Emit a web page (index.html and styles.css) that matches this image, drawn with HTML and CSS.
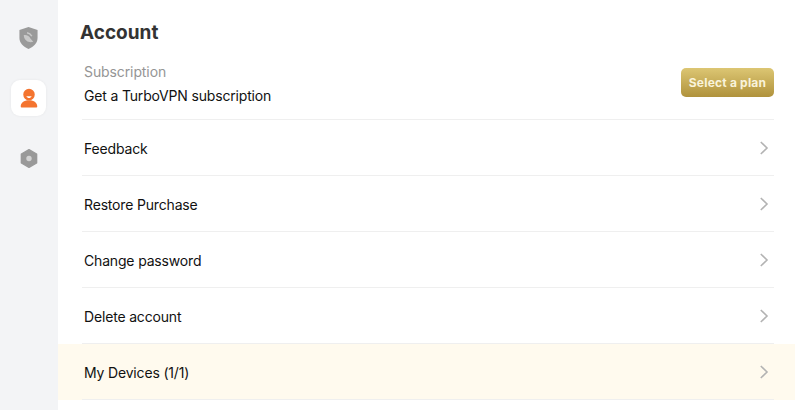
FILE: index.html
```html
<!DOCTYPE html>
<html lang="en">
<head>
<meta charset="utf-8">
<title>Account</title>
<link rel="stylesheet" href="styles.css">
</head>
<body>
<div class="app">
  <nav class="sidebar">
    <div class="nav-item">
      <svg width="21" height="24" viewBox="0 0 22 24"><path d="M11 .5 20.500 3.600V12c0 5.200-3.900 9-9.500 11.500C5.400 21 1.500 17.200 1.500 12V3.600Z" fill="#9a9a9a"/><path d="M6 9c3-.5 6 .8 7 3.500l3 3.500c-2 .8-5 .8-7-1-1.800-1.500-2.800-3.500-3-6Z" fill="#c9c9c9"/><path d="M9.500 6.500c2 .3 3.800 1.500 5 3.500" fill="none" stroke="#c9c9c9" stroke-width="1.500"/></svg>
    </div>
    <div class="nav-item active">
      <svg width="18" height="20" viewBox="0 0 20 22"><path d="M10 .8a6.400 6.400 0 0 1 6.400 6.400A6.400 6.400 0 0 1 10 13.600 6.400 6.400 0 0 1 3.600 7.200 6.400 6.400 0 0 1 10 .8Z" fill="#f4742f"/><path d="M7 9c.7 1.400 1.800 2 3 2s2.300-.6 3-2Z" fill="#fff"/><path d="M.8 20.500c0-4.200 3.500-7 9.200-7s9.200 2.800 9.200 7c0 .6-.4 1-1 1H1.800c-.6 0-1-.4-1-1Z" fill="#f4742f"/></svg>
    </div>
    <div class="nav-item">
      <svg width="18" height="21" viewBox="0 0 20 22"><path d="M10 1.200 18.500 6v10L10 20.800 1.500 16V6Z" fill="#999" stroke="#999" stroke-width="1.500" stroke-linejoin="round"/><circle cx="10" cy="11" r="3" fill="#d2d2d2"/></svg>
    </div>
  </nav>
  <main class="content">
    <h1 class="title">Account</h1>
    <section class="row subscription">
      <div class="sub-text">
        <div class="sub-label">Subscription</div>
        <div class="label">Get a TurboVPN subscription</div>
      </div>
      <button class="plan-btn">Select a plan</button>
    </section>
    <a class="row link"><span class="label">Feedback</span><svg class="chev" width="10" height="14" viewBox="0 0 10 14"><path d="M1.800 1 8 7l-6.200 6" fill="none" stroke="#b3b3b3" stroke-width="1.600"/></svg></a>
    <a class="row link"><span class="label">Restore Purchase</span><svg class="chev" width="10" height="14" viewBox="0 0 10 14"><path d="M1.800 1 8 7l-6.200 6" fill="none" stroke="#b3b3b3" stroke-width="1.600"/></svg></a>
    <a class="row link"><span class="label">Change password</span><svg class="chev" width="10" height="14" viewBox="0 0 10 14"><path d="M1.800 1 8 7l-6.200 6" fill="none" stroke="#b3b3b3" stroke-width="1.600"/></svg></a>
    <a class="row link"><span class="label">Delete account</span><svg class="chev" width="10" height="14" viewBox="0 0 10 14"><path d="M1.800 1 8 7l-6.200 6" fill="none" stroke="#b3b3b3" stroke-width="1.600"/></svg></a>
    <a class="row link highlight"><span class="label">My Devices (1/1)</span><svg class="chev" width="10" height="14" viewBox="0 0 10 14"><path d="M1.800 1 8 7l-6.200 6" fill="none" stroke="#b3b3b3" stroke-width="1.600"/></svg></a>
  </main>
</div>
</body>
</html>
```
FILE: styles.css
```css
* { box-sizing: border-box; }
html, body { margin: 0; height: 100%; overflow: hidden; background: #fff; }
body { font-family: Inter, "Liberation Sans", sans-serif; color: #1c1c1c; }
.app { display: flex; height: 410px; }
.sidebar {
  width: 58px;
  flex: none;
  background: #f3f4f6;
  display: flex;
  flex-direction: column;
  align-items: center;
  padding: 20px 1px 0 0;
  gap: 24px;
}
.nav-item {
  width: 35px;
  height: 36px;
  display: flex;
  align-items: center;
  justify-content: center;
  border-radius: 9px;
}
.nav-item.active { background: #fff; box-shadow: 0 0 3px rgba(0,0,0,.06); }
.content { flex: 1; min-width: 0; display: flex; flex-direction: column; }
.title {
  margin: 0;
  padding: 21px 0 0 22px;
  font-size: 19px;
  line-height: 24px;
  font-weight: 700;
  color: #333;
  height: 52px;
}
.row {
  display: flex;
  align-items: center;
  justify-content: space-between;
  margin: 0 21px 0 24px;
  border-bottom: 1px solid #efefef;
}
.subscription { height: 68px; padding: 0 0 4px 2px; }
.sub-label { font-size: 14px; letter-spacing: -.1px; line-height: 20px; color: #959595; margin-bottom: 4px; }
.sub-text .label { display: block; line-height: 20px; }
.sub-text { padding-top: 1px; }
.label { font-size: 14px; letter-spacing: -.17px; color: #111; }
.plan-btn {
  width: 93px;
  height: 29px;
  border: 0;
  border-radius: 5px;
  padding: 0;
  margin-bottom: 2px;
  background: linear-gradient(#dcc673, #b0923c);
  color: #f9f3da;
  font: 700 12px Inter, "Liberation Sans", sans-serif;
  letter-spacing: .2px;
}
.link { height: 56px; padding: 0 0 0 2px; }
.link .label { padding-top: 2px; }
.chev { margin-right: 5px; }
.highlight {
  margin: 0;
  padding: 0 21px 0 26px;
  background: #fffaee;
  border-bottom: 0;
  position: relative;
}
.highlight .label { padding-top: 0; }
.highlight::after {
  content: "";
  position: absolute;
  left: 24px;
  right: 21px;
  bottom: 0;
  height: 1px;
  background: #efefef;
}
```
